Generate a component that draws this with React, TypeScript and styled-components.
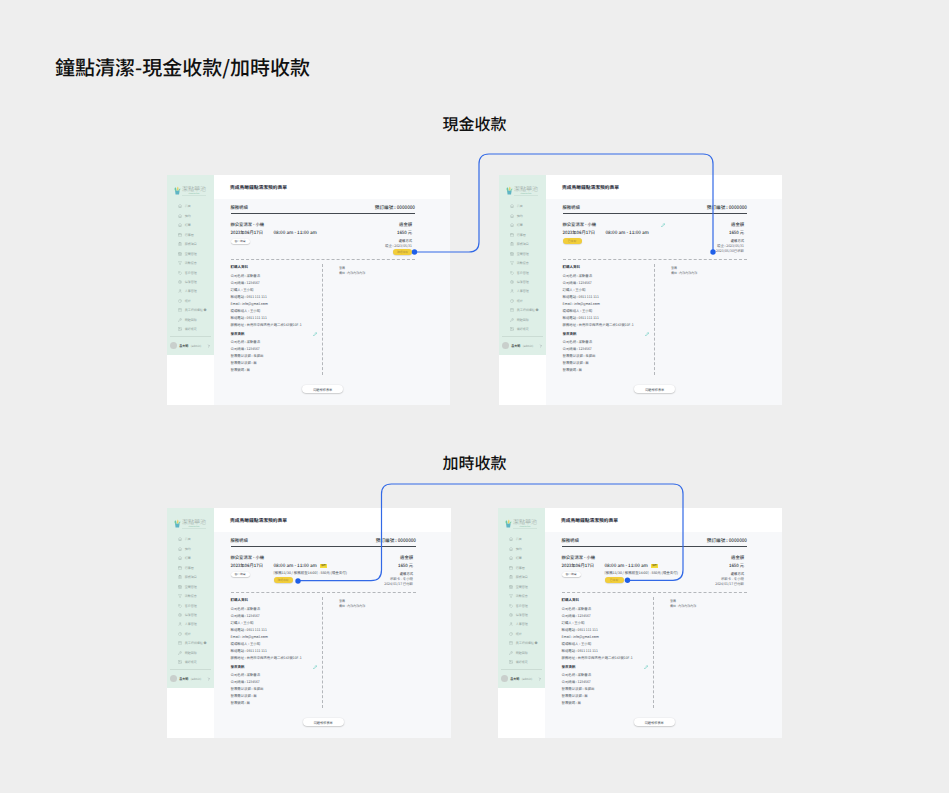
import {
  Calendar,
  CalendarDays,
  ChevronRight,
  ClipboardList,
  Filter,
  Home,
  Image,
  Pencil,
  PieChart,
  Settings,
  ShoppingBag,
  Tag,
  User,
  Wrench,
} from "lucide-react";
import styled, { createGlobalStyle } from "styled-components";

const NAV_ITEMS = [
  { label: "首頁", icon: Home },
  { label: "預約", icon: Home },
  { label: "訂單", icon: Home },
  { label: "行事曆", icon: Calendar },
  { label: "服務項目", icon: ClipboardList },
  { label: "空間管理", icon: CalendarDays },
  { label: "活動優惠", icon: Filter },
  { label: "客戶管理", icon: Tag },
  { label: "保潔管理", icon: Settings },
  { label: "人事管理", icon: User },
  { label: "統計", icon: PieChart },
  { label: "員工培訓課程 ●", icon: ShoppingBag },
  { label: "問題回報", icon: Wrench },
  { label: "偏好設定", icon: Image },
];

const BUYER_ROWS = [
  "公司名稱 : 潔點薈浩",
  "公司統編 : 1234567",
  "訂購人 : 王小明",
  "聯絡電話 : 0911 111 111",
  "Email : info@gmail.com",
  "現場聯絡人 : 王小明",
  "聯絡電話 : 0911 111 111",
  "服務地址 : 台南市中西區南美路二段143號10F-1",
];

const INVOICE_ROWS = [
  "公司名稱 : 潔點薈浩",
  "公司統編 : 1234567",
  "發票需以法郵 : 未郵出",
  "發票需以法郵 : 無",
  "發票號碼 : 無",
];

type Variant = "cash" | "extra";

interface ScreenProps {
  variant: Variant;
  after?: boolean;
  width: number;
}

const Logo = () => (
  <LogoRow>
    <svg width="6.5" height="9" viewBox="0 0 9 12">
      <path d="M1.4 6 L7.8 6 L7 11.5 L2.2 11.5 Z" fill="#5fb5c4" />
      <path d="M2.4 7 C0 5 0.6 2.6 1.8 1.4 C3.2 2.8 4.2 5 2.4 7 Z" fill="#6cc7a3" />
      <path d="M4.6 6.5 C3.6 4 4.4 1.6 5.4 0.4 C6.6 2.4 6.6 4.8 4.6 6.5 Z" fill="#e9d264" />
      <path d="M6 7 C6 5 7 3.8 8.8 3.4 C9 5 8.2 6.6 6 7 Z" fill="#86cfae" />
    </svg>
    <LogoText>
      <LogoName>潔點藥池</LogoName>
      <LogoSub>clean &amp; clinic</LogoSub>
    </LogoText>
  </LogoRow>
);

const Sidebar = () => (
  <Side>
    <Logo />
    <Nav>
      {NAV_ITEMS.map(({ label, icon: Icon }) => (
        <NavItem key={label}>
          <Icon size={4} strokeWidth={1.6} />
          <span>{label}</span>
        </NavItem>
      ))}
    </Nav>
    <UserRow>
      <Avatar />
      <UserName>呂大明</UserName>
      <UserRole>(admin)</UserRole>
      <UserChevron>
        <ChevronRight size={4} strokeWidth={2} color="#667" />
      </UserChevron>
    </UserRow>
  </Side>
);

const EditIcon = () => <Pencil size={4.4} strokeWidth={2} color="#43c3b2" />;

const Screen = ({ variant, after = false, width }: ScreenProps) => (
  <ScreenBox $width={width}>
    <Sidebar />
    <Main>
      <Header>完成鳥瞰鐘點清潔預約表單</Header>
      <Body>
        <TitleRow>
          <span>服務明細</span>
          <OrderNumber>預訂編號 : 0000000</OrderNumber>
        </TitleRow>
        <Booking>
          <NameCol>
            <NameLine>
              辦公室清潔 - 小機
              {variant === "cash" && after && (
                <NamePencil>
                  <EditIcon />
                </NamePencil>
              )}
            </NameLine>
            <StrongLine>2023年06月17日</StrongLine>
            {variant === "cash" && after ? (
              <YellowPill $top={1}>已收款</YellowPill>
            ) : (
              <OutlineButton>客戶填寫</OutlineButton>
            )}
          </NameCol>
          <TimeCol>
            <StrongLine />
            <TimeLine>
              08:00 am - 11:00 am
              {variant === "extra" && <TimeTag>加時</TimeTag>}
            </TimeLine>
            {variant === "extra" && (
              <>
                <NoteLine>[服務11/30 / 服務前至14:00] - 550元 (現金支付)</NoteLine>
                <YellowPill $top={1.4}>{after ? "已收款" : "確認收款"}</YellowPill>
              </>
            )}
          </TimeCol>
          <PayCol>
            <StrongLine>適金額</StrongLine>
            <StrongLine>1650 元</StrongLine>
            <PayTitle>處帳方式</PayTitle>
            {variant === "cash" ? (
              <>
                <SmallLine>現金 : 2023/05/31</SmallLine>
                {after ? (
                  <SmallLine>2023/05/30已收款</SmallLine>
                ) : (
                  <YellowPill $top={1.2}>確認收款</YellowPill>
                )}
              </>
            ) : (
              <>
                <SmallLine>收款卡 - 冬小機</SmallLine>
                <SmallLine>2024/01/17 已付款</SmallLine>
              </>
            )}
          </PayCol>
        </Booking>
        <Details>
          <BuyerCol>
            <SectionLabel>
              <span>訂購人資料</span>
            </SectionLabel>
            {BUYER_ROWS.map((row) => (
              <InfoRow key={row}>{row}</InfoRow>
            ))}
            <InvoiceLabel>
              <span>發票資訊</span>
              <EditIcon />
            </InvoiceLabel>
            {INVOICE_ROWS.map((row, i) => (
              <InfoRow key={i}>{row}</InfoRow>
            ))}
          </BuyerCol>
          <NoteCol>
            <NoteItem>發票</NoteItem>
            <NoteItem>備註 : 內部內部內部</NoteItem>
          </NoteCol>
        </Details>
        <Footer>
          <WhiteButton>問題報修表單</WhiteButton>
        </Footer>
      </Body>
    </Main>
  </ScreenBox>
);

const App = () => (
  <Board>
    <GlobalStyle />
    <Title>鐘點清潔-現金收款/加時收款</Title>
    <Section>
      <Heading>現金收款</Heading>
      <ScreenRow>
        <Screen variant="cash" width={283} />
        <Screen variant="cash" after width={283} />
      </ScreenRow>
    </Section>
    <SecondSection>
      <SecondHeading>加時收款</SecondHeading>
      <ScreenRow>
        <Screen variant="extra" width={284} />
        <Screen variant="extra" after width={284} />
      </ScreenRow>
    </SecondSection>
    <Connectors width="949" height="793" viewBox="0 0 949 793">
      <path d="M414 252 H469 Q479 252 479 242 V164 Q479 154 489 154 H703 Q713 154 713 164 V252" />
      <circle cx="414.5" cy="252" r="2.7" />
      <circle cx="713" cy="252" r="2.7" />
      <path d="M298 580.7 H371 Q381.5 580.7 381.5 570 V494 Q381.5 484 391.5 484 H673 Q683 484 683 494 V570 Q683 580.3 673 580.3 H628" />
      <circle cx="298" cy="581" r="2.7" />
      <circle cx="627.5" cy="580.3" r="2.7" />
    </Connectors>
  </Board>
);

const GlobalStyle = createGlobalStyle`
  html, body {
    margin: 0;
    background: #eeeeee;
  }
  * {
    box-sizing: border-box;
  }
`;

const Board = styled.div`
  position: relative;
  width: 949px;
  height: 793px;
  padding-top: 52px;
  font-family: "Noto Sans CJK TC", "Noto Sans", sans-serif;
  text-rendering: geometricPrecision;
  color: #1e2530;
  overflow: hidden;
`;

const Title = styled.h1`
  margin: 0 0 29px 55px;
  font-size: 20px;
  line-height: 30px;
  font-weight: 500;
  color: #111111;
`;

const Section = styled.section`
  width: 615px;
  margin-left: 167px;
`;

const SecondSection = styled(Section)`
  margin-top: 45px;
`;

const Heading = styled.h2`
  margin: 0 0 40px;
  font-size: 16px;
  line-height: 24px;
  font-weight: 500;
  text-align: center;
  color: #111111;
`;

const SecondHeading = styled(Heading)`
  margin-bottom: 34px;
`;

const ScreenRow = styled.div`
  display: flex;
  justify-content: space-between;
`;

const ScreenBox = styled.div<{ $width: number }>`
  display: grid;
  grid-template-columns: 47px 1fr;
  align-items: start;
  width: ${({ $width }) => $width}px;
  height: 230px;
  background: #ffffff;
`;

const Side = styled.aside`
  display: flex;
  flex-direction: column;
  height: 180px;
  background: #deefe7;
  font-size: 3px;
  color: #93a29e;
`;

const LogoRow = styled.div`
  display: flex;
  align-items: center;
  gap: 1.5px;
  height: 26px;
  padding: 4px 0 0 7px;
`;

const LogoText = styled.div`
  display: flex;
  flex-direction: column;
  align-items: center;
  gap: 0.5px;
  border-bottom: 0.5px solid #cfe3da;
`;

const LogoName = styled.span`
  font-size: 6px;
  line-height: 7.5px;
  font-weight: 300;
  color: #9aa8a3;
`;

const LogoSub = styled.span`
  font-size: 1.8px;
  line-height: 2px;
  color: #82bda4;
`;

const Nav = styled.nav`
  display: flex;
  flex-direction: column;
  padding: 0 0 0 11px;
  margin-top: 0.5px;
`;

const NavItem = styled.div`
  display: flex;
  align-items: center;
  gap: 2.8px;
  height: 9.48px;
  white-space: nowrap;

  svg {
    flex: none;
    color: #93a29e;
  }
`;

const UserRow = styled.div`
  display: flex;
  align-items: center;
  height: 19px;
  margin: 1.5px 3px 0;
  border-top: 0.7px solid #cbdcd4;
`;

const Avatar = styled.div`
  flex: none;
  width: 7px;
  height: 7px;
  margin-right: 2.3px;
  border-radius: 50%;
  background: #c9cfcc;
`;

const UserName = styled.span`
  font-size: 3px;
  font-weight: 700;
  color: #333c3a;
  margin-right: 2.5px;
  white-space: nowrap;
`;

const UserRole = styled.span`
  font-size: 2.8px;
  color: #87938f;
`;

const UserChevron = styled.span`
  display: flex;
  margin-left: auto;
`;

const Main = styled.main`
  display: flex;
  flex-direction: column;
  height: 100%;
  background: #f7f8fa;
`;

const Header = styled.div`
  display: flex;
  align-items: center;
  height: 24px;
  padding-left: 16px;
  background: #ffffff;
  font-size: 4.75px;
  font-weight: 700;
  color: #1f2b38;
`;

const Body = styled.div`
  display: flex;
  flex-direction: column;
  padding: 5px 35px 0 16.5px;
  font-size: 3.7px;
  color: #444c55;
`;

const TitleRow = styled.div`
  display: flex;
  justify-content: space-between;
  align-items: center;
  height: 7.5px;
  border-bottom: 1px solid #444a50;
  padding-bottom: 1px;
  box-sizing: content-box;
  font-size: 4.3px;
  font-weight: 500;
  color: #333a42;
`;

const OrderNumber = styled.span`
  font-size: 4.6px;
`;

const Booking = styled.div`
  display: grid;
  grid-template-columns: 43px 1fr auto;
  height: 46.6px;
  padding-top: 7.5px;
  border-bottom: 0.6px dashed #b4b7bb;
`;

const NameCol = styled.div`
  display: flex;
  flex-direction: column;
  align-items: flex-start;
  white-space: nowrap;
`;

const TimeCol = styled.div`
  display: flex;
  flex-direction: column;
  align-items: flex-start;
  white-space: nowrap;
`;

const PayCol = styled.div`
  display: flex;
  flex-direction: column;
  align-items: flex-end;
  padding-right: 3px;
  white-space: nowrap;
`;

const StrongLine = styled.div`
  display: flex;
  align-items: center;
  height: 8px;
  font-size: 4.3px;
  font-weight: 500;
  color: #333a42;
`;

const TimeLine = styled(StrongLine)`
  font-size: 4.6px;
`;

const NameLine = styled(StrongLine)`
  position: relative;
`;

const NamePencil = styled.span`
  position: absolute;
  left: 98px;
  top: 1.5px;
`;

const TimeTag = styled.span`
  margin-left: 3px;
  padding: 0 1px;
  height: 3.4px;
  line-height: 3.4px;
  font-size: 2.4px;
  background: #f5dc3a;
  color: #55500f;
`;

const NoteLine = styled.div`
  height: 5px;
  margin-top: 1px;
  line-height: 5px;
  font-size: 3.5px;
  color: #3e4650;
`;

const SmallLine = styled.div`
  height: 5px;
  line-height: 5px;
  font-size: 3.4px;
  color: #5a626b;
`;

const PayTitle = styled(SmallLine)`
  margin-top: 1px;
  font-size: 3.3px;
  font-weight: 500;
  color: #3b424b;
`;

const YellowPill = styled.div<{ $top: number }>`
  display: flex;
  justify-content: center;
  align-items: center;
  width: 19px;
  height: 5.6px;
  margin-top: ${({ $top }) => $top}px;
  border-radius: 3px;
  background: #f2ce3a;
  box-shadow: 0 0.5px 1px rgba(0, 0, 0, 0.2);
  font-size: 2.8px;
  color: #b4963a;
`;

const OutlineButton = styled.div`
  display: flex;
  justify-content: center;
  align-items: center;
  width: 19px;
  height: 5px;
  margin-top: 1.5px;
  border-radius: 3px;
  background: #ffffff;
  box-shadow: 0 0.5px 1px rgba(0, 0, 0, 0.3);
  font-size: 2.8px;
  color: #444c55;
`;

const Details = styled.div`
  display: grid;
  grid-template-columns: 92.5px 1fr;
  height: 115px;
  padding-top: 4px;
`;

const BuyerCol = styled.div`
  padding-right: 5px;
  border-right: 0.6px dashed #b4b7bb;
  height: 111px;
`;

const SectionLabel = styled.div`
  display: flex;
  justify-content: space-between;
  align-items: center;
  height: 7.8px;
  font-size: 3.5px;
  font-weight: 700;
  color: #2d343c;
`;

const InvoiceLabel = styled(SectionLabel)`
  height: 6.8px;
  margin: 2.8px 0 1px;
`;

const InfoRow = styled.div`
  height: 7px;
  line-height: 7px;
  font-size: 3.4px;
  white-space: nowrap;
  color: #4c545c;
`;

const NoteCol = styled.div`
  padding: 2px 0 0 16px;
`;

const NoteItem = styled.div`
  height: 5px;
  line-height: 5px;
  font-size: 3px;
  color: #4c545c;
`;

const Footer = styled.div`
  display: flex;
  justify-content: center;
  margin-top: 10px;
`;

const WhiteButton = styled.div`
  display: flex;
  justify-content: center;
  align-items: center;
  width: 41px;
  height: 8px;
  border-radius: 4px;
  background: #ffffff;
  box-shadow: 0 0.6px 1.4px rgba(0, 0, 0, 0.3);
  font-size: 3.2px;
  color: #444c55;
`;

const Connectors = styled.svg`
  position: absolute;
  left: 0;
  top: 0;
  pointer-events: none;

  path {
    fill: none;
    stroke: #3269e6;
    stroke-width: 1.2;
  }

  circle {
    fill: #1f5fe8;
  }
`;

export default App;
